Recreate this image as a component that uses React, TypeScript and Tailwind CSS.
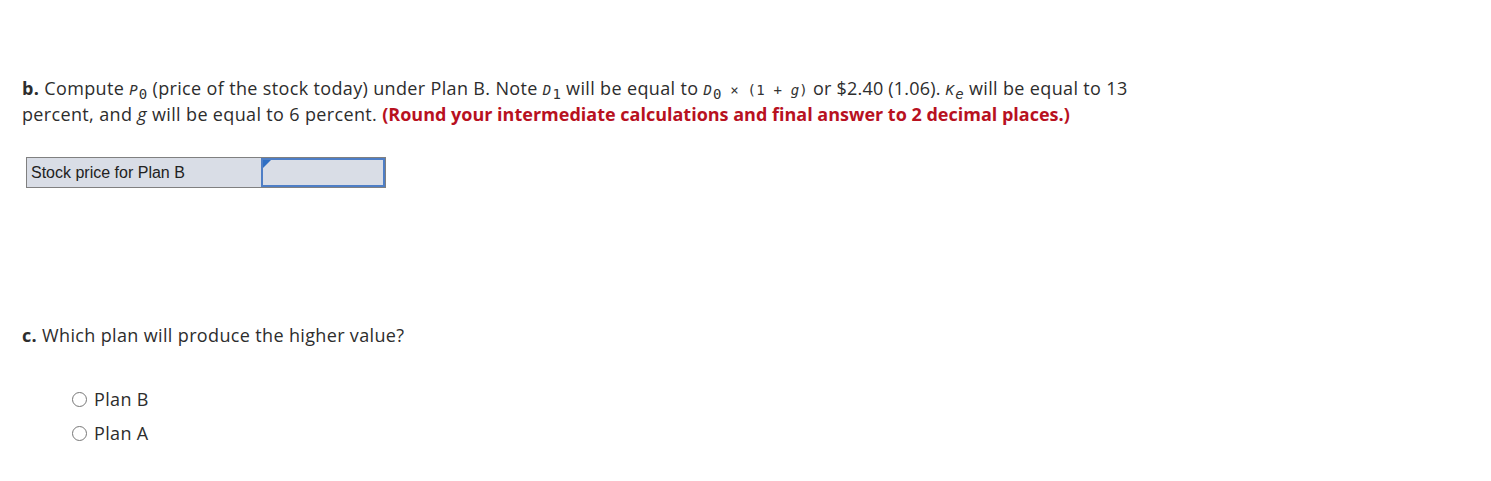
import React from "react";

const mono = "font-['DejaVu_Sans_Mono',monospace] text-[14px] leading-none tracking-[0.2px] text-[#333]";
const sub = "relative top-[4px] ml-[1px] text-[14px]";

export default function App() {
  return (
    <div className="w-[1491px] h-[481px] bg-white text-[#2d2d2d] font-['Open_Sans',sans-serif] text-[18px] leading-[26px] tracking-[0.35px]">
      <div className="pl-[22px] pt-[75px] w-[1162px]">
        <p>
          <b className="font-bold">b.</b> Compute{" "}
          <span className={mono}><i>P</i><span className={sub}>0</span></span>{" "}
          (price of the stock today) under Plan B. Note{" "}
          <span className={mono}><i>D</i><span className={sub}>1</span></span>{" "}
          will be equal to{" "}
          <span className={mono}>
            <i>D</i><span className={sub}>0</span> × (1 + <i>g</i>)
          </span>{" "}
          <span className="tracking-[0.2px]">or $2.40 (1.06).</span>{" "}
          <span className={mono}><i>K</i><i className={sub}>e</i></span>{" "}
          will be equal to 13 percent, and <i>g</i> will be equal to 6 percent.{" "}
          <b className="font-bold text-[#b8111f] tracking-normal">(Round your intermediate calculations and final answer to 2 decimal places.)</b>
        </p>
      </div>
      <div className="pl-[26px] pt-[30px]">
        <div className="flex w-[360px] h-[31px] border border-[#808080] bg-[#d9dde6] tracking-normal">
          <div className="w-[234px] pl-[4px] flex items-center font-['Liberation_Sans',Arial,sans-serif] text-[16px] text-[#222]">
            Stock price for Plan B
          </div>
          <div className="relative flex-1 border-2 border-[#4e7ec6] bg-[#d9dde6]">
            <div className="absolute left-0 top-0 w-0 h-0 border-t-[8px] border-t-[#2f6fc4] border-r-[8px] border-r-transparent" />
          </div>
        </div>
      </div>
      <div className="pl-[22px] pt-[134px]">
        <p><b className="font-bold">c.</b> Which plan will produce the higher value?</p>
      </div>
      <div className="pl-[72px] pt-[38px] flex flex-col gap-[8px]">
        {["Plan B", "Plan A"].map((p) => (
          <label key={p} className="flex items-center gap-[7px] h-[26px]">
            <span className="w-[15px] h-[15px] rounded-full border border-[#777] bg-white" />
            <span>{p}</span>
          </label>
        ))}
      </div>
    </div>
  );
}
